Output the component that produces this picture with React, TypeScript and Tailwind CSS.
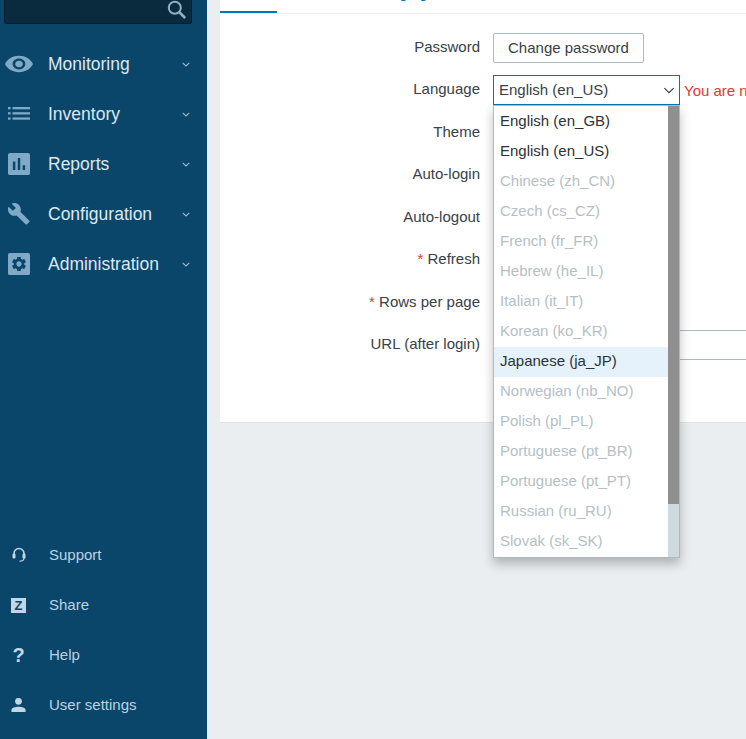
import React from "react";

const iconColor = "#7fa9c6";

const Eye = () => (
  <svg width="28" height="24" viewBox="1 1 22 22" className="block" preserveAspectRatio="none">
    <path fill={iconColor} d="M12 4.5C7 4.5 2.73 7.61 1 12c1.73 4.39 6 7.5 11 7.5s9.27-3.11 11-7.5c-1.73-4.39-6-7.5-11-7.5zM12 17c-2.76 0-5-2.24-5-5s2.24-5 5-5 5 2.24 5 5-2.24 5-5 5zm0-8c-1.66 0-3 1.34-3 3s1.34 3 3 3 3-1.34 3-3-1.34-3-3-3z" />
  </svg>
);
const ListIcon = () => (
  <svg width="22" height="22" viewBox="0 0 22 22" className="block">
    <g fill={iconColor}>
      <rect x="0" y="4" width="2.6" height="2.3" />
      <rect x="0" y="9.2" width="2.6" height="2.3" />
      <rect x="0" y="14.4" width="2.6" height="2.3" />
      <rect x="4.5" y="4" width="17.5" height="2.3" />
      <rect x="4.5" y="9.2" width="17.5" height="2.3" />
      <rect x="4.5" y="14.4" width="17.5" height="2.3" />
    </g>
  </svg>
);
const Chart = () => (
  <svg width="22" height="22" viewBox="3 3 18 18" className="block">
    <path fill={iconColor} d="M19.5 3h-15C3.7 3 3 3.7 3 4.5v15c0 .8.7 1.5 1.5 1.5h15c.8 0 1.5-.7 1.5-1.5v-15c0-.8-.7-1.5-1.5-1.5zM9 17H7v-7h2v7zm4 0h-2V7h2v10zm4 0h-2v-4h2v4z" />
  </svg>
);
const Wrench = () => (
  <svg width="22" height="22" viewBox="1 1 22.4 22.4" className="block">
    <path fill={iconColor} d="M22.7 19l-9.1-9.1c.9-2.3.4-5-1.5-6.9-2-2-5-2.4-7.4-1.3L9 6 6 9 1.6 4.7C.4 7.1.9 10.1 2.9 12.1c1.9 1.9 4.6 2.4 6.9 1.5l9.1 9.1c.4.4 1 .4 1.4 0l2.3-2.3c.5-.4.5-1.1.1-1.4z" />
  </svg>
);
const Gear = () => (
  <svg width="22" height="22" viewBox="0 0 24 24" className="block">
    <rect width="24" height="24" rx="2" fill={iconColor} />
    <path fill="#0a466a" transform="translate(2.4 2.4) scale(0.8)" d="M19.14 12.94c.04-.3.06-.61.06-.94 0-.32-.02-.64-.07-.94l2.03-1.58c.18-.14.23-.41.12-.61l-1.92-3.32c-.12-.22-.37-.29-.59-.22l-2.39.96c-.5-.38-1.03-.7-1.62-.94l-.36-2.54c-.04-.24-.24-.41-.48-.41h-3.84c-.24 0-.43.17-.47.41l-.36 2.54c-.59.24-1.13.57-1.62.94l-2.39-.96c-.22-.08-.47 0-.59.22L2.74 8.87c-.12.21-.08.47.12.61l2.03 1.58c-.05.3-.09.63-.09.94s.02.64.07.94l-2.03 1.58c-.18.14-.23.41-.12.61l1.92 3.32c.12.22.37.29.59.22l2.39-.96c.5.38 1.03.7 1.62.94l.36 2.54c.05.24.24.41.48.41h3.84c.24 0 .44-.17.47-.41l.36-2.54c.59-.24 1.13-.56 1.62-.94l2.39.96c.22.08.47 0 .59-.22l1.92-3.32c.12-.22.07-.47-.12-.61l-2.01-1.58zM12 15.6c-1.98 0-3.6-1.62-3.6-3.6s1.62-3.6 3.6-3.6 3.6 1.62 3.6 3.6-1.62 3.6-3.6 3.6z" />
  </svg>
);
const Chevron = ({
  color = "#9db9cd",
  w = 8,
  h = 5,
  sw = 1.1,
}: {
  color?: string;
  w?: number;
  h?: number;
  sw?: number;
}) => (
  <svg width={w} height={h} viewBox="0 0 8 5" className="block">
    <path d="M0.7 0.8 L4 4 L7.3 0.8" fill="none" stroke={color} strokeWidth={sw} />
  </svg>
);
const Search = () => (
  <svg width="20" height="20" viewBox="0 0 20 20" className="block">
    <circle cx="7.8" cy="7.8" r="6" fill="none" stroke="#8fb0c6" strokeWidth="2" />
    <path d="M12.3 12.3 L18.2 18" stroke="#8fb0c6" strokeWidth="2.6" />
  </svg>
);
const Headset = () => (
  <svg width="14" height="16" viewBox="0 0 14 16" className="block">
    <path d="M2 8 V6.5 A5 5 0 0 1 12 6.5 V8" fill="none" stroke="#c3d6e4" strokeWidth="1.6" />
    <rect x="0.5" y="6.5" width="3" height="5" rx="1.2" fill="#c3d6e4" />
    <rect x="10.5" y="6.5" width="3" height="5" rx="1.2" fill="#c3d6e4" />
    <path d="M12 11 C12 13.5 10 14.2 7.5 14.2" fill="none" stroke="#c3d6e4" strokeWidth="1.2" />
  </svg>
);
const Person = () => (
  <svg width="16" height="16" viewBox="0 0 16 16" className="block">
    <circle cx="8" cy="4" r="3.6" fill="#c3d6e4" />
    <path d="M0.5 15.5 V13.5 C0.5 10.8 4.5 9.8 8 9.8 S15.5 10.8 15.5 13.5 V15.5 Z" fill="#c3d6e4" />
  </svg>
);

const menu = [
  { label: "Monitoring", icon: <Eye />, box: "w-[28px] ml-[5px] mr-[15px]" },
  { label: "Inventory", icon: <ListIcon />, box: "w-[22px] ml-[8px] mr-[18px]" },
  { label: "Reports", icon: <Chart />, box: "w-[22px] ml-[8px] mr-[18px]" },
  { label: "Configuration", icon: <Wrench />, box: "w-[22px] ml-[8px] mr-[18px]" },
  { label: "Administration", icon: <Gear />, box: "w-[22px] ml-[8px] mr-[18px]" },
];

const bottomMenu = [
  { label: "Support", icon: <Headset /> },
  {
    label: "Share",
    icon: (
      <span className="flex h-[15px] w-[15px] items-center justify-center bg-[#c3d6e4] text-[13px] font-bold leading-none text-[#0a466a]">
        Z
      </span>
    ),
  },
  { label: "Help", icon: <span className="text-[20px] font-bold leading-none text-[#c3d6e4]">?</span> },
  { label: "User settings", icon: <Person /> },
];

const languages = [
  { label: "English (en_GB)", on: true },
  { label: "English (en_US)", on: true },
  { label: "Chinese (zh_CN)" },
  { label: "Czech (cs_CZ)" },
  { label: "French (fr_FR)" },
  { label: "Hebrew (he_IL)" },
  { label: "Italian (it_IT)" },
  { label: "Korean (ko_KR)" },
  { label: "Japanese (ja_JP)", on: true, hover: true },
  { label: "Norwegian (nb_NO)" },
  { label: "Polish (pl_PL)" },
  { label: "Portuguese (pt_BR)" },
  { label: "Portuguese (pt_PT)" },
  { label: "Russian (ru_RU)" },
  { label: "Slovak (sk_SK)" },
];

const Row = ({ label, req, children }: { label: string; req?: boolean; children?: React.ReactNode }) => (
  <div className="flex h-[42.5px] items-start">
    <div className="w-[273px] shrink-0 pt-[4.6px] pr-[13px] text-right leading-[18px] text-[#384048]">
      {req && <span className="text-[#e33734]">* </span>}
      {label}
    </div>
    {children}
  </div>
);

export default function App() {
  return (
    <div className="flex h-[739px] w-[746px] overflow-hidden bg-[#ebeef0] font-['Liberation_Sans',sans-serif] text-[15px]">
      <aside className="flex h-full w-[207px] shrink-0 flex-col justify-between bg-[#0a466a]">
        <div>
          <div className="ml-[4px] flex h-[24px] w-[188px] items-start justify-end rounded-b-[3px] border border-t-0 border-[#04202f] bg-[#0a2a3e] pr-[4px]">
            <Search />
          </div>
          <nav className="mt-[15px]">
            {menu.map((m) => (
              <div key={m.label} className="flex h-[50px] items-center">
                <div className={`flex justify-center ${m.box}`}>{m.icon}</div>
                <span className="flex-1 pt-[1px] text-[17.5px] text-[#dde8f0]">{m.label}</span>
                <div className="mr-[17px]">
                  <Chevron />
                </div>
              </div>
            ))}
          </nav>
        </div>
        <nav className="mb-[9px]">
          {bottomMenu.map((m) => (
            <div key={m.label} className="flex h-[50px] items-center">
              <div className="ml-[11px] mr-[23px] flex w-[15px] justify-center">{m.icon}</div>
              <span className="text-[15px] text-[#bdd2e2]">{m.label}</span>
            </div>
          ))}
        </nav>
      </aside>

      <main className="ml-[13px] w-[700px] shrink-0">
        <section className="relative h-[423px] border-b border-[#dfe4e7] bg-white">
          <div className="flex h-[14px] overflow-hidden border-b border-[#ebeef0] text-[#0275b8]">
            <div className="h-[14px] w-[57px] border-b-[3px] border-[#0275b8]" />
            <div className="-mt-[16px] ml-[78px] leading-[18px]">Messaging</div>
          </div>
          <div className="pt-[19px]">
            <Row label="Password">
              <button className="h-[30px] w-[151px] rounded-[2px] border border-[#acbbc2] bg-white text-[#384048]">
                Change password
              </button>
            </Row>
            <Row label="Language">
              <div className="-mt-[0.5px] flex h-[30px] w-[187px] shrink-0 items-center justify-between border border-[#0275b8] bg-white pl-[5px] pr-[4px] text-[#384048]">
                English (en_US)
                <Chevron color="#384048" w={12} h={7} sw={0.8} />
              </div>
              <div className="ml-[4px] whitespace-nowrap pt-[6px] leading-[18px] text-[#e33734]">
                You are not able to choose some of the languages
              </div>
            </Row>
            <Row label="Theme" />
            <Row label="Auto-login" />
            <Row label="Auto-logout" />
            <Row label="Refresh" req />
            <Row label="Rows per page" req />
            <Row label="URL (after login)">
              <div className="-mt-[1px] h-[30px] w-[440px] shrink-0 border border-[#acbbc2] bg-white" />
            </Row>
          </div>
          <div className="absolute left-[273px] top-[105px] flex h-[453px] w-[187px] border border-[#acbbc2] bg-white shadow-[0_6px_10px_rgba(0,0,0,0.25)]">
            <ul className="flex-1 pt-[1px]">
              {languages.map((l) => (
                <li
                  key={l.label}
                  className={`flex h-[30px] items-center pb-[2px] pl-[6px] ${l.on ? "text-[#2b3238]" : "text-[#b4c0c6]"} ${
                    l.hover ? "bg-[#e5f2fb]" : ""
                  }`}
                >
                  {l.label}
                </li>
              ))}
            </ul>
            <div className="flex w-[11px] flex-col bg-[#d0d9e0]">
              <div className="h-[398px] bg-[#8f8f8f]" />
            </div>
          </div>
        </section>
      </main>
    </div>
  );
}
